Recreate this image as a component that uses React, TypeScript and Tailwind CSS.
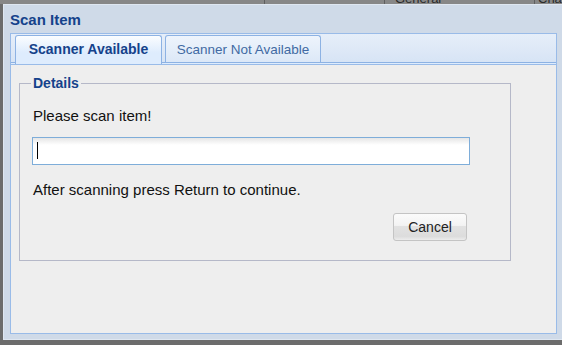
export default function App() {
  return (
    <div className="relative w-[562px] h-[345px] overflow-hidden bg-[#6c6c6c] font-['Liberation_Sans',Arial,sans-serif]">
      {/* masked grid header behind the window */}
      <div className="flex h-[4px] overflow-hidden bg-[#878787] text-[13px] leading-[16px] text-[#2a2a2a]">
        <div className="w-[265px] border-r border-[#5f5f5f]" />
        <div className="w-[120px] border-r border-[#5f5f5f]" />
        <div className="w-[150px] border-r border-[#5f5f5f] pl-[10px] -mt-[9px]">General</div>
        <div className="pl-[3px] -mt-[9px]">Cha</div>
      </div>

      {/* window */}
      <div className="absolute left-[3px] top-[4px] w-[570px] h-[336px] border border-[#dfe7f1] bg-[#cfdae8] flex flex-col">
        <div className="h-[28px] pl-[6px] pt-[6px]">
          <div className="text-[15px] leading-[18px] font-bold text-[#15428b]">Scan Item</div>
        </div>

        <div className="ml-[6px] w-[547px] h-[301px] border border-[#99bbe8] flex flex-col">
          {/* tab strip */}
          <div className="h-[29px] flex items-end gap-[3px] pl-[4px] border-b border-[#8db2e3] bg-[linear-gradient(#e6eef9,#d7e4f5)]">
            <div className="relative z-10 -mb-[2px] h-[29px] w-[147px] rounded-t-[3px] border border-b-0 border-[#8db2e3] bg-[linear-gradient(#fbfdff,#deecfd_60%)] pt-[5px] text-center text-[14px] leading-[16px] font-bold text-[#15428b]">
              Scanner Available
            </div>
            <div className="h-[27px] w-[156px] rounded-t-[3px] border border-b-0 border-[#8db2e3] bg-[linear-gradient(#eef4fc,#dce8f7)] pt-[6px] text-center text-[13.5px] leading-[16px] text-[#416aa3]">
              Scanner Not Available
            </div>
          </div>
          <div className="h-[2px] bg-[#deecfd] border-b border-[#99bbe8]" />

          {/* body */}
          <div className="flex-1 bg-[#eeeeee] pl-[8px] pt-[10px]">
            <fieldset className="w-[492px] border border-[#b5b8c8] px-[13px] pt-[16px] pb-[19px]">
              <legend className="-ml-[2px] px-[2px] text-[14px] leading-[16px] font-bold text-[#15428b]">Details</legend>
              <p className="text-[15px] leading-[18px] text-[#111]">Please scan item!</p>
              <div className="mt-[12px] -ml-px w-[438px] h-[28px] border border-[#7eadd9] bg-[linear-gradient(#e6e6e6,#ffffff_7px)] pl-[4px] pt-[4px]">
                <div className="w-px h-[17px] bg-black" />
              </div>
              <p className="mt-[16px] text-[15px] leading-[18px] text-[#111]">After scanning press Return to continue.</p>
              <div className="mt-[14px] w-[434px] flex justify-end">
                <button className="h-[28px] w-[74px] rounded-[3px] border border-[#c4c4c4] bg-[linear-gradient(#fbfbfb_0%,#f3f3f3_44%,#e2e2e2_47%,#dcdcdc_86%,#ececec_100%)] text-[14px] leading-[16px] text-[#222]">
                  Cancel
                </button>
              </div>
            </fieldset>
          </div>
        </div>
      </div>
    </div>
  )
}
